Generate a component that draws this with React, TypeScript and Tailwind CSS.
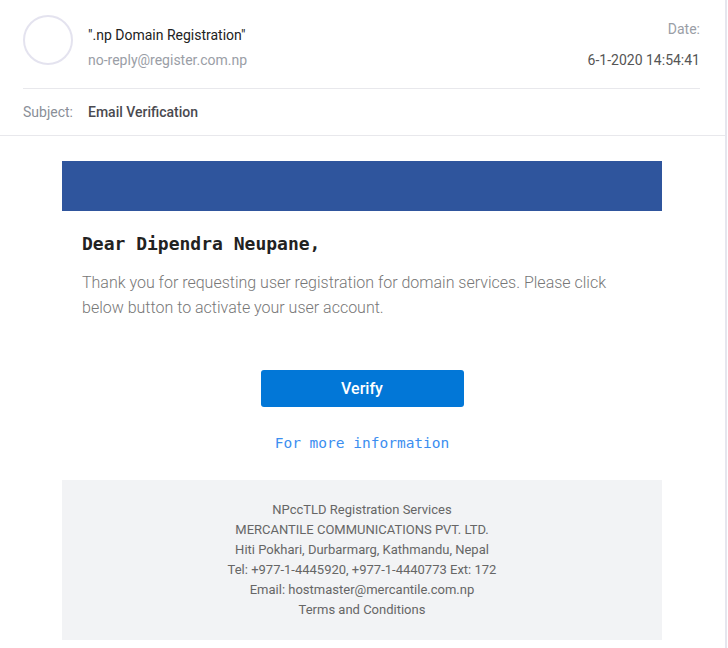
export default function App() {
  const footer = [
    "NPccTLD Registration Services",
    "MERCANTILE COMMUNICATIONS PVT. LTD.",
    "Hiti Pokhari, Durbarmarg, Kathmandu, Nepal",
    "Tel: +977-1-4445920, +977-1-4440773 Ext: 172",
    "Email: hostmaster@mercantile.com.np",
    "Terms and Conditions",
  ];

  return (
    <div
      className="w-[728px] h-[648px] bg-white overflow-hidden"
      style={{ fontFamily: "Roboto, 'Liberation Sans', sans-serif" }}
    >
      <div className="w-[727px] h-full border-r-2 border-[#e6e6ee]">
        {/* header */}
        <div className="px-[23px] pr-[25px]">
          <div className="flex items-start h-[89px] border-b border-[#e8e8ec]">
            <div className="mt-[15px] w-[50px] h-[50px] rounded-full border-2 border-[#e4e3ef]" />
            <div className="ml-[15px] mt-[25px] flex-1">
              <div className="text-[14px] leading-[20px] text-[#222]">".np Domain Registration"</div>
              <div className="mt-[5px] text-[14px] leading-[20px] text-[#9a9ea6]">no-reply@register.com.np</div>
            </div>
            <div className="mt-[19px] text-right">
              <div className="text-[14px] leading-[20px] text-[#9a9ea6]">Date:</div>
              <div className="mt-[11px] text-[14px] leading-[20px] text-[#555]">6-1-2020 14:54:41</div>
            </div>
          </div>
          <div className="flex items-center h-[46px]">
            <div className="w-[65px] text-[14px] text-[#8a8f98]">Subject:</div>
            <div className="text-[14px] font-medium text-[#4a4a50]">Email Verification</div>
          </div>
        </div>
        <div className="border-t border-[#e8e8ec]" />

        {/* body */}
        <div className="w-[600px] ml-[62px] mt-[25px]">
          <div className="h-[50px] bg-[#2f559d]" />
          <div className="px-[20px]">
            <div
              className="mt-[20px] text-[18px] leading-[25px] font-bold text-[#222]"
              style={{ fontFamily: "'DejaVu Sans Mono', monospace" }}
            >
              Dear Dipendra Neupane,
            </div>
            <p className="mt-[14px] text-[16px] leading-[25px] font-light text-[#777]">
              Thank you for requesting user registration for domain services. Please click below button to activate your
              user account.
            </p>
          </div>
          <div className="flex flex-col items-center mt-[50px]">
            <button className="w-[203px] h-[37px] rounded-[3px] bg-[#0277d7] text-white text-[16px] font-medium">
              Verify
            </button>
            <div
              className="mt-[26px] text-[14.5px] leading-[20px] text-[#3b8ef0]"
              style={{ fontFamily: "'DejaVu Sans Mono', monospace" }}
            >
              For more information
            </div>
          </div>
          <div className="mt-[27px] h-[160px] bg-[#f2f3f5] pt-[20px] flex flex-col items-center">
            {footer.map((line) => (
              <div key={line} className="text-[13px] leading-[20px] text-[#666]">
                {line}
              </div>
            ))}
          </div>
        </div>
      </div>
    </div>
  );
}
